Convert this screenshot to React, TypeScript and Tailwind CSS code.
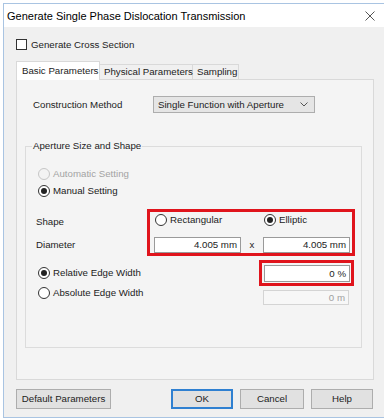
import React from 'react';

function Radio({ checked, disabled }: { checked?: boolean; disabled?: boolean }) {
  return (
    <span
      className={`flex h-[12px] w-[12px] shrink-0 items-center justify-center rounded-full border ${
        disabled ? 'border-[#c6c6c6] bg-[#f3f3f3]' : 'border-[#333333] bg-white'
      }`}
    >
      {checked && <span className="h-[6px] w-[6px] rounded-full bg-[#222222]" />}
    </span>
  );
}

function NumBox({ value, className }: { value: string; className: string }) {
  return (
    <div className={`flex items-center justify-end border border-[#9a9a9a] bg-white pr-[3px] ${className}`}>
      {value}
    </div>
  );
}

function Btn({ label, width, primary }: { label: string; width: string; primary?: boolean }) {
  return (
    <div
      className={`flex h-[20px] items-center justify-center bg-[#e1e1e1] ${width} ${
        primary ? 'border-2 border-[#2f80d1]' : 'border border-[#adadad]'
      }`}
    >
      {label}
    </div>
  );
}

export default function App() {
  return (
    <div className="h-[419px] w-[384px] overflow-hidden whitespace-nowrap bg-white pl-[3px] pt-[3px] font-['Liberation_Sans',Arial,sans-serif] text-[9.7px] leading-[12px] text-[#222222]">
      <div className="flex h-[415px] flex-col border-b border-l border-t border-[#a9c4e2]">
        {/* Title bar */}
        <div className="flex h-[23px] shrink-0 items-center justify-between bg-white pl-[3px] pr-[9px]">
          <span className="text-[11px] text-black">Generate Single Phase Dislocation Transmission</span>
          <svg width="10" height="10" viewBox="0 0 10 10" className="text-[#555]">
            <path d="M0.5 0.5 L9.5 9.5 M9.5 0.5 L0.5 9.5" stroke="currentColor" strokeWidth="1" fill="none" />
          </svg>
        </div>

        {/* Body */}
        <div className="flex flex-1 flex-col bg-[#f0f0f0] pl-[12px] pr-[10px]">
          <div className="mt-[12px] flex h-[11px] items-center gap-[4px]">
            <span className="h-[11px] w-[11px] border border-[#333333] bg-white" />
            <span>Generate Cross Section</span>
          </div>

          {/* Tabs */}
          <div className="relative z-10 mt-[11px] flex h-[19px] items-end">
            <div className="flex h-[19px] w-[84px] items-center border border-b-0 border-[#d9d9d9] bg-white pl-[5px]">
              Basic Parameters
            </div>
            <div className="mb-[1px] flex h-[15px] w-[93px] items-center border-r border-t border-[#d9d9d9] bg-[#f0f0f0] pl-[4px]">
              Physical Parameters
            </div>
            <div className="mb-[1px] flex h-[15px] w-[46px] items-center border-r border-t border-[#d9d9d9] bg-[#f0f0f0] pl-[4px]">
              Sampling
            </div>
          </div>

          {/* Tab page */}
          <div className="-mt-px flex h-[301px] w-[358px] flex-col border border-[#d9d9d9] bg-[#f4f4f4] pl-[16px] pt-[16px]">
            <div className="flex h-[17px] items-center">
              <span className="w-[120px]">Construction Method</span>
              <div className="flex h-[17px] w-[162px] items-center justify-between border border-[#adadad] bg-[#e5e5e5] pl-[4px] pr-[6px]">
                <span>Single Function with Aperture</span>
                <svg width="8" height="5" viewBox="0 0 8 5">
                  <path d="M0.5 0.5 L4 4 L7.5 0.5" stroke="#555" strokeWidth="1" fill="none" />
                </svg>
              </div>
            </div>

            <fieldset className="-ml-[8px] mt-[27px] w-[337px] border border-[#dcdcdc] pb-[42px]">
              <legend className="ml-[6px] px-[1px]">Aperture Size and Shape</legend>

              <div className="mt-[16px] flex h-[12px] items-center gap-[3px] pl-[12px] text-[#a3a3a3]">
                <Radio disabled />
                <span>Automatic Setting</span>
              </div>
              <div className="mt-[5px] flex h-[12px] items-center gap-[3px] pl-[12px]">
                <Radio checked />
                <span>Manual Setting</span>
              </div>

              {/* Shape and diameter */}
              <div className="mt-[12px] flex">
                <div className="flex w-[121px] flex-col pl-[10px] pt-[7px]">
                  <span>Shape</span>
                  <span className="mt-[11px]">Diameter</span>
                </div>
                <div className="flex h-[47px] w-[208px] flex-col border-[3px] border-[#e0141c]">
                  <div className="mt-[2px] flex h-[12px] items-center pl-[5px]">
                    <div className="flex w-[109px] items-center gap-[3px]">
                      <Radio />
                      <span>Rectangular</span>
                    </div>
                    <div className="flex items-center gap-[3px]">
                      <Radio checked />
                      <span>Elliptic</span>
                    </div>
                  </div>
                  <div className="mt-[11px] flex items-center pl-[4px]">
                    <NumBox value="4.005 mm" className="h-[16px] w-[87px]" />
                    <span className="w-[22px] text-center">x</span>
                    <NumBox value="4.005 mm" className="h-[16px] w-[87px]" />
                  </div>
                </div>
              </div>

              {/* Edge width */}
              <div className="mt-[4px] flex items-center">
                <div className="flex w-[233px] items-center gap-[3px] pl-[12px]">
                  <Radio checked />
                  <span>Relative Edge Width</span>
                </div>
                <div className="h-[26px] w-[95px] border-[3px] border-[#e0141c] pl-[2px] pt-[2px]">
                  <NumBox value="0 %" className="h-[17px] w-[86px]" />
                </div>
              </div>
              <div className="mt-[1px] flex">
                <div className="flex h-[12px] w-[237px] items-center gap-[3px] pl-[12px]">
                  <Radio />
                  <span>Absolute Edge Width</span>
                </div>
                <div className="mt-[3px] flex h-[15px] w-[86px] items-center justify-end border border-[#d4d4d4] bg-[#f7f7f7] pr-[3px] text-[#a0a0a0]">
                  0 m
                </div>
              </div>
            </fieldset>
          </div>

          {/* Buttons */}
          <div className="mt-[9px] flex justify-between pr-[1px]">
            <Btn label="Default Parameters" width="w-[95px]" />
            <div className="flex gap-[7px]">
              <Btn label="OK" width="w-[62px]" primary />
              <Btn label="Cancel" width="w-[64px]" />
              <Btn label="Help" width="w-[62px]" />
            </div>
          </div>
        </div>
      </div>
    </div>
  );
}
